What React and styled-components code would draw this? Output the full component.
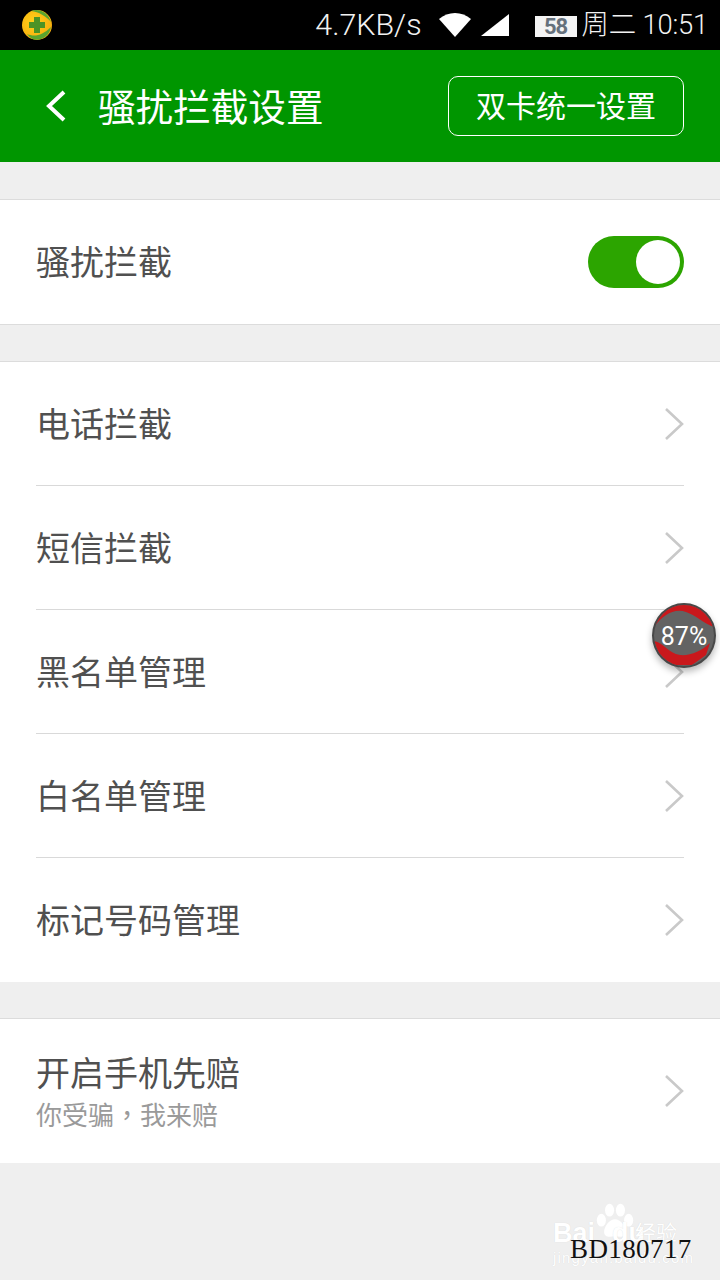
import React from "react";
import styled, { createGlobalStyle } from "styled-components";

const Global = createGlobalStyle`
  html, body { margin: 0; padding: 0; background: #efefef; }
  * { box-sizing: border-box; }
`;
const CJK = `"Noto Sans CJK SC", "Noto Sans", sans-serif`;

const Page = styled.div`
  position: relative; width: 720px; height: 1280px; overflow: hidden;
  background: #efefef; font-family: ${CJK};
`;
const StatusBar = styled.div`
  height: 50px; background: #000; display: flex; align-items: center;
  padding: 0 12px 0 21px; color: #f2f2f2;
`;
const Spacer = styled.div`flex: 1;`;
const Speed = styled.span`
  font: 300 30.4px/50px "Roboto", "Liberation Sans", sans-serif; margin-right: 16px;
`;
const SignalGap = styled.span`width: 8px;`;
const Sim = styled.span`
  width: 42px; height: 21px; background: #f4f4f4; color: #66717c; margin: 2px 5px 0 25px;
  font: bold 22px/21px "Roboto", sans-serif; text-align: center; letter-spacing: -1px;
`;
const Clock = styled.span`
  font: 300 27.4px/50px "Roboto", ${CJK}; letter-spacing: -0.2px;
`;
const Header = styled.header`
  height: 112px; background: #009600; display: flex; align-items: center;
  padding: 0 36px 0 44px; color: #fff;
`;
const Title = styled.h1`
  margin: -2px 0 0 30px; flex: 1; font: 400 37.6px/44px ${CJK};
`;
const HeaderButton = styled.button`
  width: 236px; height: 60px; border: 1px solid #fff; border-radius: 10px; background: none;
  color: #fff; font: 400 30px/40px ${CJK}; padding: 0 0 4px;
`;
const Card = styled.section`
  background: #fff; margin-top: ${p => p.$top}px;
  border-top: 1px solid #dcdcdc; border-bottom: ${p => p.$bottom ? "1px solid #dcdcdc" : "0"};
`;
const Row = styled.div`
  height: ${p => p.$h}px; margin: 0 36px; display: flex; align-items: center; justify-content: space-between;
  border-bottom: ${p => p.$line ? "1px solid #d9d9d9" : "0"};
`;
const Texts = styled.div`display: flex; flex-direction: column; margin-bottom: 2px;`;
const Label = styled.span`
  font: 400 34px/44px ${CJK}; color: #505050; margin-top: -2px;
`;
const Sub = styled.span`
  font: 400 26px/30px ${CJK}; color: #9a9a9a; margin-top: 5px;
`;
const CentredComma = styled.span`font-family: "Noto Sans CJK TC", sans-serif;`;
const Switch = styled.div`
  width: 96px; height: 52px; border-radius: 26px; background: #2ca500; padding: 4px; display: flex; justify-content: flex-end;
`;
const Knob = styled.div`width: 44px; height: 44px; border-radius: 50%; background: #fff;`;
const Badge = styled.div`
  position: absolute; left: 652px; top: 603px; width: 64px; height: 65px; border-radius: 50%;
  border: 2px solid #484848; overflow: hidden; box-shadow: 0 4px 7px rgba(0,0,0,.28);
  display: flex; align-items: center; justify-content: center;
  background: #636363; color: #fff; font: 400 25px/1 "Roboto", sans-serif;
`;
const BadgeWave = styled.svg`position: absolute; inset: 0;`;
const BadgeText = styled.span`position: relative; top: 1px;`;
const Watermark = styled.div`
  position: absolute; left: 552px; top: 1200px; width: 150px; height: 70px; color: #fff;
  text-shadow: 0 0 1px rgba(0,0,0,.12);
`;
const WmLogo = styled.span`
  position: absolute; left: 1px; top: 20px; font: bold 27px/1 "Liberation Sans", sans-serif; white-space: nowrap;
`;
const WmLogoEnd = styled.span`margin-left: 17px;`;
const WmCn = styled.span`position: absolute; left: 83px; top: 21px; font: 400 21px/1 ${CJK}; white-space: nowrap;`;
const WmSub = styled.div`position: absolute; left: 1px; top: 50px; font: 400 15px/1 "Liberation Sans", sans-serif; letter-spacing: 1.2px; white-space: nowrap;`;
const Paw = styled.svg`position: absolute; left: 43px; top: 2px;`;
const Code = styled.div`
  position: absolute; left: 570px; top: 1234px; font: 400 27px/30px "Liberation Serif", serif; color: #111; letter-spacing: 0.4px;
`;

const Chevron = () => (
  <svg width="20" height="34" viewBox="0 0 20 34" fill="none" stroke="#c9c9c9" strokeWidth="2.6">
    <path d="M2 2l16 15L2 32" />
  </svg>
);
const Back = () => (
  <svg width="24" height="36" viewBox="0 0 24 36" fill="none" stroke="#fff" strokeWidth="4">
    <path d="M20 4L5 18l15 14" />
  </svg>
);
const Logo = () => (
  <svg width="32" height="32" viewBox="0 0 32 32">
    <defs>
      <radialGradient id="lg" cx="0.4" cy="0.4" r="0.7">
        <stop offset="0" stopColor="#ffd21a" />
        <stop offset="1" stopColor="#f6a90c" />
      </radialGradient>
    </defs>
    <circle cx="16" cy="16" r="15" fill="url(#lg)" />
    <path d="M10 2C18-1 27 3 30 13 25 7 18 3 10 2zM6 25c7 3 15 2 24-7-2 12-17 18-24 7z" fill="#5aa52f" />
    <path d="M13 8h6v5h5v6h-5v5h-6v-5H8v-6h5z" fill="#4c9326" />
  </svg>
);
const Wifi = () => (
  <svg width="34" height="26" viewBox="0 0 34 26"><path d="M1 7C10-1 24-1 33 7L17 25z" fill="#fff" /></svg>
);
const Signal = () => (
  <svg width="30" height="24" viewBox="0 0 30 24"><path d="M29 1v22H1z" fill="#fff" /></svg>
);

const items = ["电话拦截", "短信拦截", "黑名单管理", "白名单管理", "标记号码管理"];

export default function App() {
  return (
    <Page>
      <Global />
      <StatusBar>
        <Logo />
        <Spacer />
        <Speed>4.7KB/s</Speed>
        <Wifi />
        <SignalGap />
        <Signal />
        <Sim>58</Sim>
        <Clock>周二 10:51</Clock>
      </StatusBar>
      <Header>
        <Back />
        <Title>骚扰拦截设置</Title>
        <HeaderButton>双卡统一设置</HeaderButton>
      </Header>
      <Card $top={37} $bottom>
        <Row $h={124}>
          <Label>骚扰拦截</Label>
          <Switch><Knob /></Switch>
        </Row>
      </Card>
      <Card $top={36}>
        {items.map((t, i) => (
          <Row key={t} $h={124} $line={i < items.length - 1}>
            <Label>{t}</Label>
            <Chevron />
          </Row>
        ))}
      </Card>
      <Card $top={36}>
        <Row $h={144}>
          <Texts>
            <Label>开启手机先赔</Label>
            <Sub>你受骗<CentredComma>，</CentredComma>我来赔</Sub>
          </Texts>
          <Chevron />
        </Row>
      </Card>
      <Badge>
        <BadgeWave width="60" height="61" viewBox="0 0 60 61">
          <path d="M0 22C9 10 20 3 32 7c10 3 18 12 28 15L54 7 40 0H18L4 8z" fill="#c9181c" />
          <path d="M0 36c10 2 14 12 26 14 10 1 22-4 30-12l-4 12-14 10H20L6 52z" fill="#c9181c" />
        </BadgeWave>
        <BadgeText>87%</BadgeText>
      </Badge>
      <Watermark>
        <Paw width="40" height="40" viewBox="0 0 44 40" fill="#fff">
          <ellipse cx="7" cy="18" rx="5" ry="7" />
          <ellipse cx="16" cy="7" rx="5" ry="7" />
          <ellipse cx="28" cy="7" rx="5" ry="7" />
          <ellipse cx="37" cy="18" rx="5" ry="7" />
          <path d="M22 17c6 0 12 8 12 14 0 6-7 6-12 4-5 2-12 2-12-4 0-6 6-14 12-14z" />
        </Paw>
        <WmLogo>Bai<WmLogoEnd>du</WmLogoEnd></WmLogo>
        <WmCn>经验</WmCn>
        <WmSub>jingyan.baidu.com</WmSub>
      </Watermark>
      <Code>BD180717</Code>
    </Page>
  );
}
